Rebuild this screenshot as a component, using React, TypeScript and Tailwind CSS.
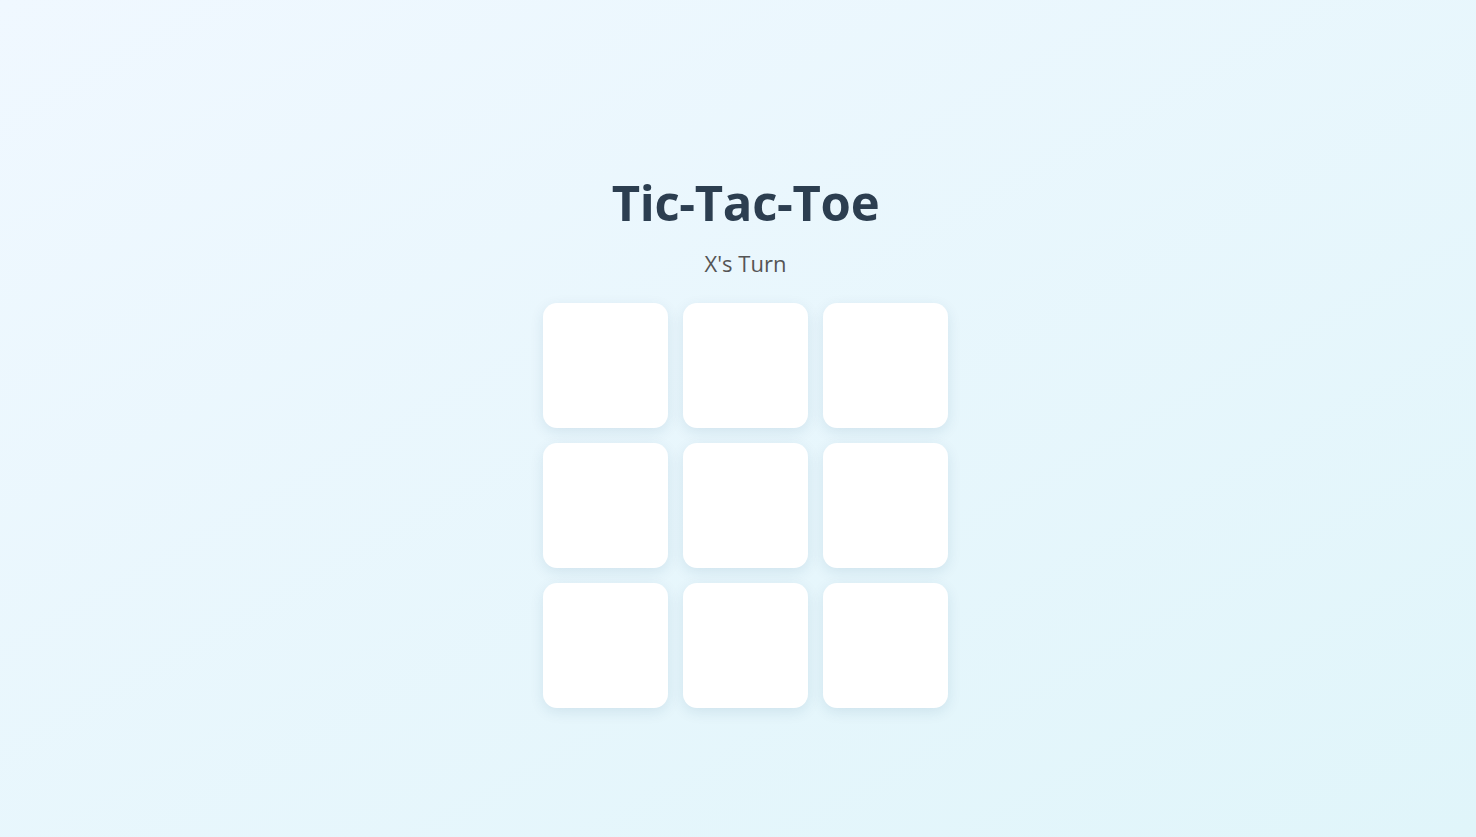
import React, { useState } from 'react';

const App = () => {
  const [cells, setCells] = useState<(string | null)[]>(Array(9).fill(null));
  const [xTurn, setXTurn] = useState(true);

  const play = (i: number) => {
    if (cells[i]) return;
    const next = [...cells];
    next[i] = xTurn ? 'X' : 'O';
    setCells(next);
    setXTurn(!xTurn);
  };

  return (
    <div className="min-h-screen w-full bg-gradient-to-br from-[#f0f8ff] to-[#e0f5fa] font-['Open_Sans',sans-serif]">
      <div className="flex flex-col items-center pt-[171px] pl-[15px]">
        <h1 className="text-[49px] leading-[63px] font-bold text-[#2c3e50] tracking-[-0.3px]">Tic-Tac-Toe</h1>
        <p className="mt-[14px] text-[22px] leading-[30px] text-[#555]">{xTurn ? "X's Turn" : "O's Turn"}</p>
        <div className="mt-[25px] grid grid-cols-3 gap-[15px]">
          {cells.map((c, i) => (
            <button
              key={i}
              onClick={() => play(i)}
              className="w-[125px] h-[125px] rounded-[14px] bg-white shadow-[0_4px_14px_rgba(0,70,110,0.1)] text-5xl font-bold text-[#2c3e50]"
            >
              {c}
            </button>
          ))}
        </div>
      </div>
    </div>
  );
};

export default App;
